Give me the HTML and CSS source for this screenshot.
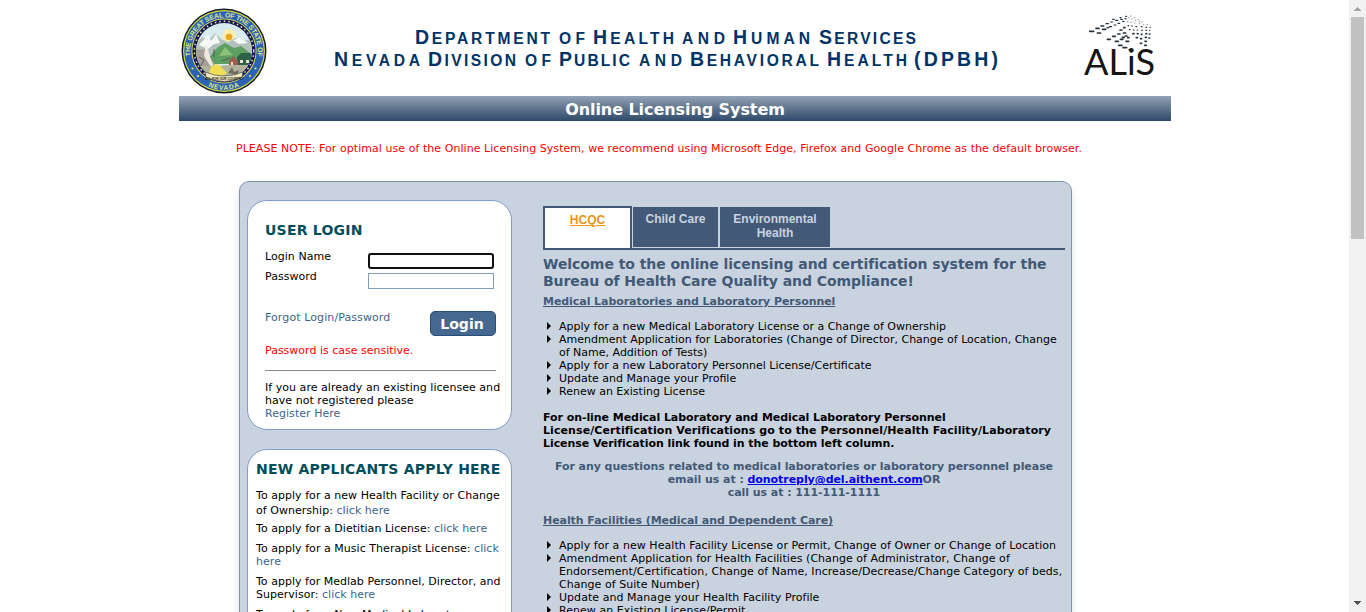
FILE: index.html
```html
<!DOCTYPE html>
<html lang="en">
<head>
<meta charset="utf-8">
<title>Online Licensing System</title>
<link rel="stylesheet" href="styles.css">
</head>
<body>
<div class="viewport">
<div class="page">
  <header class="header">
    <svg class="seal" width="88" height="88" viewBox="0 0 88 88">
      <defs>
        <path id="arcTop" d="M10.7 50 A33.8 33.8 0 1 1 77.3 50"/>
        <path id="arcBottom" d="M13.1 67.5 A38.8 38.8 0 0 0 74.9 67.5"/>
        <clipPath id="scene"><circle cx="44" cy="44" r="28"/></clipPath>
      </defs>
      <circle cx="44" cy="44" r="42.5" fill="#111c2c"/>
      <circle cx="44" cy="44" r="41" fill="#d4da3c"/>
      <circle cx="44" cy="44" r="39.8" fill="#2b62b4"/>
      <circle cx="44" cy="44" r="32.6" fill="#d9d55c"/>
      <circle cx="44" cy="44" r="31.6" fill="#161a4c"/>
      <circle cx="44" cy="44" r="29.7" fill="none" stroke="#e9e6c0" stroke-width="1.5" stroke-dasharray="1.5 3"/>
      <g clip-path="url(#scene)">
        <rect x="14" y="14" width="60" height="60" fill="#d8ecf0"/>
        <circle cx="49" cy="29" r="7" fill="#f7efb2"/>
        <circle cx="49" cy="30" r="3.3" fill="#f2a51e"/>
        <path d="M14 39 L22 30 28 34 35 26 41 32 48 35 55 31 64 34 74 31 V48 H14Z" fill="#b4c2bd"/>
        <path d="M19 38 L28 28 31 34 36 27 40 36 34 37 28 42Z M53 33 L60 31 68 36 59 37Z" fill="#f5faf6"/>
        <path d="M30 49 L38 40 45 36 54 41 61 39 74 49 V57 H28Z" fill="#5d9f61"/>
        <path d="M39 49 L45 40 53 48Z" fill="#8cc277"/>
        <path d="M14 43 L25 42 35 58 46 68 H14Z" fill="#a7a097"/>
        <path d="M26 35 L24 49 31 60 36 65 30 50Z" fill="#eee8df"/>
        <path d="M57 50 L61 46 70 46 74 50 V58 H57Z" fill="#2d6149"/>
        <path d="M49 54 L53 49 58 54 V60 H49Z" fill="#9b5b50"/>
        <path d="M51 55h2v3h-2zm9-2h3v3h-3zm6 0h3v3h-3z" fill="#e9e4cb"/>
        <path d="M14 59 H39 L48 58 H74 V75 H14Z" fill="#b0b39a"/>
        <path d="M31 60 Q38 54 42 61 L47 66 41 70 28 69Z" fill="#f0df54"/>
        <path d="M48 66 L52 60 54 65 59 63 57 68Z" fill="#706d65"/>
        <path d="M19 50 l5 3-4 7M34 42v8M42 54l8-3" stroke="#575a55" fill="none"/>
      </g>
      <path d="M25 65 Q44 73 63 65 L62 70 Q44 79 26 70Z" fill="#eee9b8" stroke="#34345b" stroke-width=".6"/>
      <text class="motto" x="44" y="72.6" text-anchor="middle">ALL FOR OUR COUNTRY</text>
      <text class="sealtext"><textPath href="#arcTop" startOffset="1" textLength="116">THE GREAT SEAL OF THE STATE OF</textPath></text>
      <text class="sealtext"><textPath href="#arcBottom" startOffset="19.5" textLength="32">NEVADA</textPath></text>
      <g fill="#e8e577"><circle cx="12.5" cy="61.5" r="1.1"/><circle cx="18" cy="69" r="1.1"/><circle cx="70" cy="69" r="1.1"/><circle cx="75.5" cy="61.5" r="1.1"/></g>
    </svg>
    <svg class="dept" width="680" height="60" viewBox="0 0 680 60">
      <g class="words">
      <text x="86" y="28.6" textLength="135"><tspan class="cap">D</tspan>EPARTMENT</text>
      <text x="230" y="28.6" textLength="26">OF</text>
      <text x="264" y="28.6" textLength="81"><tspan class="cap">H</tspan>EALTH</text>
      <text x="353" y="28.6" textLength="43">AND</text>
      <text x="404" y="28.6" textLength="77"><tspan class="cap">H</tspan>UMAN</text>
      <text x="490" y="28.6" textLength="97"><tspan class="cap">S</tspan>ERVICES</text>
      <text x="5" y="51" textLength="86"><tspan class="cap">N</tspan>EVADA</text>
      <text x="99" y="51" textLength="88"><tspan class="cap">D</tspan>IVISION</text>
      <text x="196" y="51" textLength="26">OF</text>
      <text x="230" y="51" textLength="71"><tspan class="cap">P</tspan>UBLIC</text>
      <text x="310" y="51" textLength="43">AND</text>
      <text x="361" y="51" textLength="129"><tspan class="cap">B</tspan>EHAVIORAL</text>
      <text x="498" y="51" textLength="80"><tspan class="cap">H</tspan>EALTH</text>
      <text x="585" y="51" textLength="84"><tspan class="cap">(DPBH)</tspan></text>
      </g>
    </svg>
    <svg class="alis" width="80" height="70" viewBox="0 0 80 70">
      <g transform="translate(-12 -8) scale(.3333)" stroke="#263038" fill="none" stroke-linecap="round">
        <path stroke-width="5" d="M59 79h12M82 84h10M78 70h9M98 73h9M93 63h8M112 103h9M128 94h8M136 109h9M143 87h7M151 103h8M146 121h10M157 97h6M168 109h8M159 128h11M178 134h8M150 75h6M161 68h4M173 98h4M160 84h7M166 93h5"/>
        <path stroke-width="3.5" d="M108 56h7M118 65h7M122 51h6M132 60h6M137 46h6M144 55h5M128 43h5M152 43h5M158 49h4M111 68h5M150 38h3M165 41h3M167 34h3"/>
        <path stroke-width="5" d="M224 121h5M211 115h4M225 109h4M199 98h3M212 101h3M226 97h3M237 99h2M189 86h3M202 86h2M214 88h2M228 86h2M238 87h2"/>
        <path stroke-width="3.5" d="M178 74h2M190 75h2M201 75h2M215 76h2M228 76h2M239 76h1M174 62h2M185 63h2M198 65h2M214 65h2M228 67h2M240 67h1"/>
        <path stroke-width="2.5" stroke="#7d8588" d="M172 50h2M182 52h2M193 54h2M208 56h2M220 58h2M175 38h2M185 42h2M196 46h2M207 50h2M181 33h2M193 38h2M204 44h2M215 51h2M231 59h2"/>
      </g>
      <text class="alistext" x="2" y="62" textLength="71" lengthAdjust="spacingAndGlyphs">ALiS</text>
    </svg>
  </header>
  <div class="banner">Online Licensing System</div>
  <p class="notice">PLEASE NOTE: For optimal use of the Online Licensing System, we recommend using Microsoft Edge, Firefox and Google Chrome as the default browser.</p>

  <main class="panel">
    <aside class="left">
      <form class="card login">
        <h2 class="title">USER LOGIN</h2>
        <label class="field"><span>Login Name</span><input class="box focused" type="text"></label>
        <label class="field second"><span>Password</span><input class="box" type="password"></label>
        <div class="actions"><a class="link forgot">Forgot Login/Password</a><button class="btn" type="button">Login</button></div>
        <p class="warn">Password is case sensitive.</p>
        <p class="register">If you are already an existing licensee and<br>have not registered please<br><a class="link">Register Here</a></p>
      </form>
      <section class="card apply">
        <h2 class="title">NEW APPLICANTS APPLY HERE</h2>
        <p class="item roomy">To apply for a new Health Facility or Change<br>of Ownership: <a class="link">click here</a></p>
        <p class="item">To apply for a Dietitian License: <a class="link">click here</a></p>
        <p class="item">To apply for a Music Therapist License: <a class="link">click<br>here</a></p>
        <p class="item tight">To apply for Medlab Personnel, Director, and<br>Supervisor: <a class="link">click here</a></p>
        <p class="item">To apply for a New Medical Laboratory<br>License: <a class="link">click here</a></p>
      </section>
    </aside>
    <section class="right">
      <nav class="tabs">
        <a class="tab active">HCQC</a><a class="tab child">Child Care</a><a class="tab env">Environmental<br>Health</a>
      </nav>
      <h1 class="welcome">Welcome to the online licensing and certification system for the<br>Bureau of Health Care Quality and Compliance!</h1>
      <h3 class="sub">Medical Laboratories and Laboratory Personnel</h3>
      <ul class="list">
        <li>Apply for a new Medical Laboratory License or a Change of Ownership</li>
        <li>Amendment Application for Laboratories (Change of Director, Change of Location, Change<br>of Name, Addition of Tests)</li>
        <li>Apply for a new Laboratory Personnel License/Certificate</li>
        <li>Update and Manage your Profile</li>
        <li>Renew an Existing License</li>
      </ul>
      <p class="verify">For on-line Medical Laboratory and Medical Laboratory Personnel<br><span class="loose">License/Certification Verifications go to the Personnel/Health Facility/Laboratory</span><br>License Verification link found in the bottom left column.</p>
      <p class="contact">For any questions related to medical laboratories or laboratory personnel please<br>email us at : <a class="mail">donotreply@del.aithent.com</a>OR<br>call us at : 111-111-1111</p>
      <h3 class="sub">Health Facilities (Medical and Dependent Care)</h3>
      <ul class="list facilities">
        <li>Apply for a new Health Facility License or Permit, Change of Owner or Change of Location</li>
        <li>Amendment Application for Health Facilities (Change of Administrator, Change of<br>Endorsement/Certification, Change of Name, Increase/Decrease/Change Category of beds,<br>Change of Suite Number)</li>
        <li>Update and Manage your Health Facility Profile</li>
        <li>Renew an Existing License/Permit</li>
      </ul>
    </section>
  </main>
</div>
<div class="scrollbar">
  <svg width="17" height="17" viewBox="0 0 17 17"><path d="M5 11h7v-1h-1v-1h-1v-1h-1v-1h-1v1h-1v1h-1v1h-1z" fill="#a3a3a3"/></svg>
  <div class="thumb"></div>
  <svg class="down" width="17" height="17" viewBox="0 0 17 17"><path d="M5 6h7v1h-1v1h-1v1h-1v1h-1v-1h-1v-1h-1v-1h-1z" fill="#505050"/></svg>
</div>
</div>
</body>
</html>
```
FILE: styles.css
```css
* { box-sizing: border-box; }
body { margin: 0; font: 11px/13px Verdana, "DejaVu Sans", sans-serif; color: #000; background: #fff; overflow: hidden; }
p, h1, h2, h3, ul { margin: 0; padding: 0; white-space: nowrap; }
.viewport { display: flex; height: 612px; overflow: hidden; }
.page { width: 1349px; padding-left: 179px; }
.header { width: 992px; height: 96px; display: flex; align-items: flex-start; }
.seal { margin: 7px 0 0 1px; }
.dept { margin: 15px 0 0 61px; }
.alis { margin: 13px 0 0 73px; }
.sealtext { font: bold 6.8px "Liberation Sans", sans-serif; fill: #dfe48a; }
.motto { font: bold 3.2px "Liberation Sans", sans-serif; fill: #222; }
.words text { font: bold 15.6px "Liberation Sans", sans-serif; fill: #003366; }
.words .cap { font-size: 19.5px; }
.alistext { font: 37px Lato, sans-serif; fill: #151515; }
.banner { width: 992px; height: 25px; padding-top: 1px; background: linear-gradient(#93a3b7, #64788f 45%, #2f4a6b); color: #fff; font-weight: bold; font-size: 16px; line-height: 26px; letter-spacing: -0.07px; text-align: center; }
.notice { color: #f00; margin: 21px 0 0 57px; letter-spacing: 0.052px; }
.panel { width: 833px; height: 700px; margin: 26px 0 0 60px; padding: 18px 6px 0 7px; display: flex; background: #c9d3df; border: 1px solid #8492a8; border-radius: 10px; box-shadow: 0 6px 9px #dde3ea; }
.left { width: 265px; margin-right: 31px; }
.card { border: 1px solid #829cc9; border-radius: 20px; background: #fff; letter-spacing: 0.04px; }
.login { height: 230px; padding: 21px 11px 0 17px; }
.title { color: #004e5c; font-size: 14px; line-height: 17px; letter-spacing: 0.22px; }
.field { display: flex; height: 20px; margin-top: 10px; line-height: 16px; }
.field.second { margin-top: 0; }
.field span { width: 103px; }
.box { width: 126px; height: 16px; margin: 4px 0 0; padding: 0; border: 1px solid #7f9db9; background: #fff; outline: 0; }
.focused { border: 2px solid #101010; border-radius: 3px; }
.actions { display: flex; justify-content: space-between; margin: 22px 4px 0 0; }
.link { color: #3d658d; }
.forgot { letter-spacing: 0.1px; }
.btn { width: 66px; height: 25px; margin: 0; padding: 1px 2px 0 0; border: 1px solid #274f79; border-radius: 5px; background: #44688f; color: #fff; font: bold 14px/23px Verdana, "DejaVu Sans", sans-serif; }
.warn { color: #f00; margin: 8px 4px 0 0; padding-bottom: 13px; border-bottom: 1px solid #898989; letter-spacing: 0; }
.register { padding-top: 10px; }
.apply { height: 500px; margin-top: 19px; padding: 11px 8px; }
.item { margin-bottom: 7px; }
.item.roomy { margin: 10px 0 4px; line-height: 15px; }
.item.tight { letter-spacing: 0.02px; }
.right { width: 522px; padding-top: 6px; color: #000; }
.tabs { display: flex; height: 44px; border-bottom: 2px solid #425a77; font: bold 12px/14px "Liberation Sans", Arial, sans-serif; text-align: center; color: #c9d3df; }
.tab { height: 40px; margin-top: 1px; padding-top: 5px; background: #425a77; }
.active { width: 89px; height: 42px; margin: 0 1px 0 0; border: 2px solid #425a77; border-bottom: 0; background: #fff; color: #ea9411; text-decoration: underline; }
.child { width: 85px; margin-right: 2px; }
.env { width: 110px; }
.welcome { margin-top: 6px; font-size: 14px; line-height: 17px; letter-spacing: -0.06px; color: #425a77; }
.sub { margin-top: 5px; font-size: 11px; line-height: 13px; letter-spacing: -0.06px; color: #425a77; text-decoration: underline; }
.list { list-style: none; margin: 12px 0 13px; }
.facilities { letter-spacing: 0.045px; }
.list li { position: relative; padding-left: 16px; }
.list li::before { content: ""; position: absolute; left: 4px; top: 2px; border: 4px solid transparent; border-left-color: #000; border-right: 0; }
.verify { font-weight: bold; letter-spacing: -0.06px; }
.loose { letter-spacing: 0.087px; }
.contact { margin: 10px 0 15px; color: #425a77; font-weight: bold; letter-spacing: -0.06px; text-align: center; }
.mail { color: #00e; text-decoration: underline; }
.scrollbar { width: 17px; height: 612px; background: #f1f1f1; display: flex; flex-direction: column; }
.scrollbar svg { display: block; flex: none; }
.thumb { width: 13px; height: 222px; margin-left: 2px; background: #c1c1c1; }
.down { margin-top: auto; }
```
